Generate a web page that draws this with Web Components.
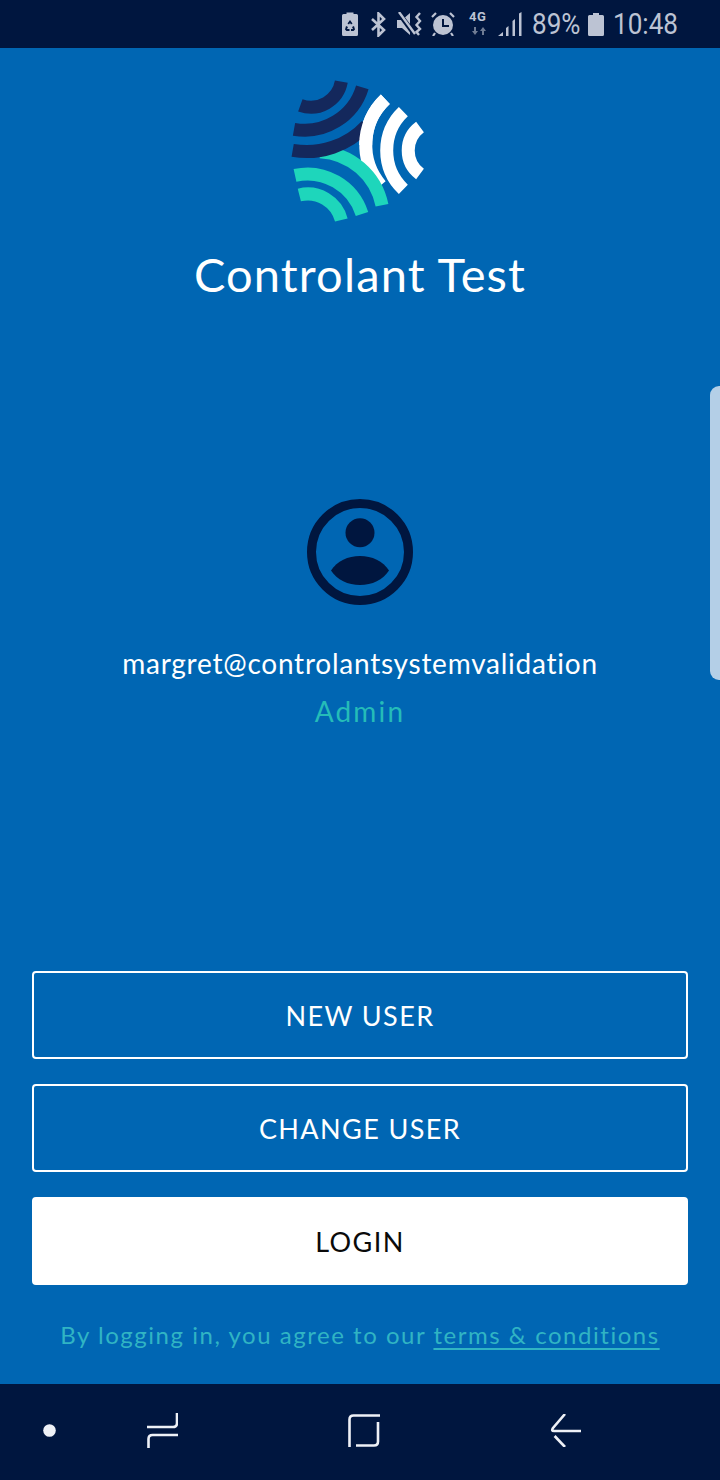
<!DOCTYPE html>
<html>
<head>
<meta charset="utf-8">
<style>
  html, body { margin: 0; padding: 0; background: #0066b3; }
  body { width: 720px; height: 1480px; overflow: hidden; font-family: Lato, "Noto Sans", sans-serif; }
</style>
</head>
<body>
<app-screen>
  <status-bar slot="top"></status-bar>
  <brand-logo title-text="Controlant Test"></brand-logo>
  <user-card email="margret@controlantsystemvalidation" role="Admin"></user-card>
  <login-actions></login-actions>
  <nav-bar slot="bottom"></nav-bar>
</app-screen>

<script>
class AppScreen extends HTMLElement {
    connectedCallback() {
        this.attachShadow({ mode: 'open' });
        this.shadowRoot.innerHTML = `
            <style>
                :host {
                    display: flex;
                    flex-direction: column;
                    width: 720px;
                    height: 1480px;
                    position: relative;
                    background: #0066b3;
                    color: #fff;
                }
                main {
                    flex: 1;
                    display: flex;
                    flex-direction: column;
                    min-height: 0;
                }
                .edge-handle {
                    position: absolute;
                    right: 0;
                    top: 386px;
                    width: 10px;
                    height: 294px;
                    background: #b4cfe7;
                    border-radius: 9px 0 0 9px;
                }
            </style>
            <slot name="top"></slot>
            <main><slot></slot></main>
            <slot name="bottom"></slot>
            <div class="edge-handle"></div>
        `;
    }
}

class StatusBar extends HTMLElement {
    connectedCallback() {
        this.attachShadow({ mode: 'open' });
        this.shadowRoot.innerHTML = `
            <style>
                :host {
                    display: flex;
                    align-items: center;
                    justify-content: flex-end;
                    height: 48px;
                    padding-right: 42px;
                    box-sizing: border-box;
                    background: #00163f;
                    color: #bcc3d3;
                    font-family: Roboto, sans-serif;
                }
                svg { display: block; flex: none; }
                .txt {
                    display: block;
                    font-size: 29px;
                    line-height: 48px;
                    transform: scaleX(.9);
                    transform-origin: left center;
                    white-space: nowrap;
                }
                .pct { width: 47px; margin-left: 10px; margin-right: 9px; }
                .time { width: 65px; margin-left: 9px; }
                .net { display: block; width: 19px; height: 28px; margin-left: 14px; }
                .net b {
                    display: block;
                    font: 700 13px/13px Roboto, sans-serif;
                    letter-spacing: .6px;
                    white-space: nowrap;
                }
                .net svg { margin: 4px 0 0 2px; }
            </style>
            <svg width="16" height="24" viewBox="0 0 16 24" style="margin-right:13px">
                <path d="M4.500 2V.5h7V2h3q1.500 0 1.500 1.500V22.500Q16 24 14.500 24h-13Q0 24 0 22.500V3.500Q0 2 1.500 2z" fill="#bcc3d3"/>
                <path d="M8 8l2.500 3.500-1.500 1L8 11l-1 1.500-1.500-1zM4 14l2 1-1 2h2.500v2H4.500L3 17.500zM12 14l-2 1 1 2H9v2h2.500L13 17.500z" fill="#00163f"/>
            </svg>
            <svg width="15" height="25" viewBox="0 0 15 25" fill="none" stroke="#bcc3d3" stroke-width="2.600" style="margin-right:11px">
                <path d="M1 7l12 11-5.500 5.500V1.500L13 7 1 18"/>
            </svg>
            <svg width="26" height="24" viewBox="0 0 26 24" style="margin-right:8px">
                <path d="M0 8h5l8-7v22l-8-7H0z" fill="#bcc3d3"/>
                <path d="M1 0l17 23" stroke="#00163f" stroke-width="5"/>
                <path d="M2 0l16 22" stroke="#bcc3d3" stroke-width="2.400"/>
                <path d="M23 1l-3.500 4 3.500 4-3.500 4 3.500 4-3.500 3 2.500 3" fill="none" stroke="#bcc3d3" stroke-width="2.400"/>
            </svg>
            <svg width="24" height="24" viewBox="0 0 24 24">
                <circle cx="12" cy="13" r="10" fill="#bcc3d3"/>
                <path d="M12 7v7h6" fill="none" stroke="#00163f" stroke-width="2"/>
                <path d="M1 5l4-4M23 5l-4-4M4 21l-2 3M20 21l2 3" stroke="#bcc3d3" stroke-width="2.200"/>
            </svg>
            <span class="net"><b>4G</b>
                <svg width="16" height="8" viewBox="0 0 16 8" fill="#6f7c94"><path d="M3 0h2v4h2L4 8 1 4h2zM11 8h2V4h2l-3-4-3 4h2z"/></svg>
            </span>
            <svg width="24" height="24" viewBox="0 0 24 24" style="margin-left:10px" fill="#bcc3d3">
                <path d="M0 24l5-4v4zM8 24V16l2.500-2v10zM14.500 24V9l2.500-2v17zM21 24V1.500L23.500 0v24z"/>
            </svg>
            <span class="txt pct">89%</span>
            <svg width="16" height="23" viewBox="0 0 16 23">
                <path d="M5 0h6v2h3.500Q16 2 16 3.500V21.500Q16 23 14.500 23H1.500Q0 23 0 21.500V3.500Q0 2 1.500 2H5z" fill="#bcc3d3"/>
            </svg>
            <span class="txt time">10:48</span>
        `;
    }
}

class BrandLogo extends HTMLElement {
    connectedCallback() {
        this.attachShadow({ mode: 'open' });
        const name = this.getAttribute('title-text');
        this.shadowRoot.innerHTML = `
            <style>
                :host {
                    display: flex;
                    flex-direction: column;
                    align-items: center;
                    padding-top: 22px;
                }
                svg { display: block; }
                h1 {
                    margin: 17px 0 0;
                    font: 400 47px/54px Lato, sans-serif;
                    color: #fff;
                    letter-spacing: 1.150px;
                }
            </style>
            <svg width="180" height="160" viewBox="0 0 540 480" fill="none" stroke-width="39">
                <g stroke="#fff">
                    <path d="M346 88A188 188 0 0 0 332 346"/>
                    <path d="M400 125A161 161 0 0 0 400 358"/>
                    <path d="M450 171A88 88 0 0 0 450 312"/>
                </g>
                <g stroke="#1ed6bb">
                    <path d="M150 245A201 201 0 0 1 336 406"/>
                    <path d="M75 316A172 172 0 0 1 276 432"/>
                    <path d="M88 375A104 104 0 0 1 214 450"/>
                </g>
                <g stroke="#14285c">
                    <path d="M91 106A93 93 0 0 0 214 35"/>
                    <path d="M72 178A181 181 0 0 0 277 52"/>
                    <path d="M68 241A245 245 0 0 0 290 166"/>
                </g>
                <path d="M346 88A188 188 0 0 0 287 225" stroke="#fff"/>
            </svg>
            <h1>${name}</h1>
        `;
    }
}

class UserCard extends HTMLElement {
    connectedCallback() {
        this.attachShadow({ mode: 'open' });
        this.shadowRoot.innerHTML = `
            <style>
                :host {
                    display: flex;
                    flex-direction: column;
                    align-items: center;
                    padding-top: 198px;
                }
                svg { display: block; }
                .email {
                    margin-top: 42px;
                    font-size: 28px;
                    line-height: 32px;
                    letter-spacing: .76px;
                    color: #fff;
                }
                .role {
                    margin-top: 16px;
                    font-size: 28px;
                    line-height: 32px;
                    letter-spacing: 2.200px;
                    color: #25bcb8;
                }
            </style>
            <svg width="106" height="106" viewBox="0 0 106 106">
                <circle cx="53" cy="53" r="48.500" fill="none" stroke="#00163f" stroke-width="9"/>
                <circle cx="53" cy="33.700" r="14.500" fill="#00163f"/>
                <path d="M24 71.500C30 62 41 57 53 57S76 62 82 71.500C76 81 65 86 53 86S30 81 24 71.500z" fill="#00163f"/>
            </svg>
            <div class="email">${this.getAttribute('email')}</div>
            <div class="role">${this.getAttribute('role')}</div>
        `;
    }
}

class ActionButton extends HTMLElement {
    connectedCallback() {
        this.attachShadow({ mode: 'open' });
        this.shadowRoot.innerHTML = `
            <style>
                :host {
                    display: flex;
                    align-items: center;
                    justify-content: center;
                    height: 88px;
                    box-sizing: border-box;
                    border: 2px solid #fff;
                    border-radius: 4px;
                    color: #fff;
                    font-size: 27px;
                    letter-spacing: 1.400px;
                }
                :host([solid]) { background: #fff; color: #0a0a0a; }
            </style>
            <slot></slot>
        `;
    }
}

class LoginActions extends HTMLElement {
    connectedCallback() {
        this.attachShadow({ mode: 'open' });
        this.shadowRoot.innerHTML = `
            <style>
                :host {
                    display: flex;
                    flex-direction: column;
                    gap: 25px;
                    margin-top: auto;
                    padding: 0 32px 34px;
                }
                p {
                    margin: 10px 0 0;
                    text-align: center;
                    font-size: 24px;
                    line-height: 30px;
                    letter-spacing: 1.530px;
                    color: #30b4c4;
                }
                a { color: inherit; text-decoration: underline; text-underline-offset: 4px; text-decoration-thickness: 1.500px; }
            </style>
            <action-button>NEW USER</action-button>
            <action-button>CHANGE USER</action-button>
            <action-button solid>LOGIN</action-button>
            <p>By logging in, you agree to our <a>terms &amp; conditions</a></p>
        `;
    }
}

class NavBar extends HTMLElement {
    connectedCallback() {
        this.attachShadow({ mode: 'open' });
        this.shadowRoot.innerHTML = `
            <style>
                :host {
                    display: flex;
                    align-items: center;
                    height: 96px;
                    box-sizing: border-box;
                    padding: 0 0 4px 43px;
                    background: #00163f;
                }
                svg { display: block; flex: none; }
            </style>
            <svg width="13" height="13" viewBox="0 0 13 13"><circle cx="6.500" cy="6.500" r="6.300" fill="#eef1f7"/></svg>
            <svg style="margin-left:91px" width="31" height="35" viewBox="0 0 31 35" fill="none" stroke="#eef1f7" stroke-width="2.600">
                <path d="M0 14H26Q30 14 30 10V0"/>
                <path d="M31 22H5.500Q1.500 22 1.500 26V35"/>
            </svg>
            <svg style="margin-left:169.500px" width="32" height="33" viewBox="0 0 32 33" fill="none" stroke="#eef1f7" stroke-width="2.600">
                <path d="M32 1.500H5.500Q1.500 1.500 1.500 5.500V33"/>
                <path d="M30 8V27.500Q30 31.500 26 31.500H8"/>
            </svg>
            <svg style="margin-left:170.500px" width="31" height="33" viewBox="0 0 31 33" fill="none" stroke="#eef1f7" stroke-width="2.600">
                <path d="M31 17H4Q1 17 3 14L15 0"/>
                <path d="M4.600 22L15 33"/>
            </svg>
        `;
    }
}

customElements.define('app-screen', AppScreen);
customElements.define('status-bar', StatusBar);
customElements.define('brand-logo', BrandLogo);
customElements.define('user-card', UserCard);
customElements.define('action-button', ActionButton);
customElements.define('login-actions', LoginActions);
customElements.define('nav-bar', NavBar);
</script>
</body>
</html>
